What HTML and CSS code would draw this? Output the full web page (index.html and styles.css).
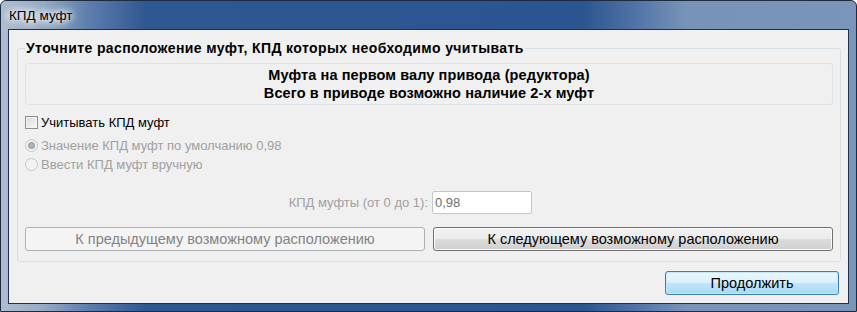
FILE: index.html
```html
<!DOCTYPE html>
<html>
<head>
    <title>КПД муфт</title>
    <link rel="stylesheet" href="styles.css">
</head>
<body>
    <div class="window">
        <div class="titlebar">КПД муфт</div>
        <div class="client">
            <fieldset class="group">
                <legend>Уточните расположение муфт, КПД которых необходимо учитывать</legend>
                <div class="info">
                    <div>Муфта на первом валу привода (редуктора)</div>
                    <div>Всего в приводе возможно наличие 2-х муфт</div>
                </div>
                <label class="row check-row">
                    <span class="checkbox"></span>
                    Учитывать КПД муфт
                </label>
                <div class="row radio-row first disabled">
                    <span class="radio checked"></span>
                    Значение КПД муфт по умолчанию 0,98
                </div>
                <div class="row radio-row disabled">
                    <span class="radio"></span>
                    Ввести КПД муфт вручную
                </div>
                <div class="field-row">
                    <span class="field-label">КПД муфты (от 0 до 1):</span>
                    <span class="field-input">0,98</span>
                </div>
                <div class="nav-buttons">
                    <div class="btn btn-disabled">К предыдущему возможному расположению</div>
                    <div class="btn">К следующему возможному расположению</div>
                </div>
            </fieldset>
            <div class="footer">
                <div class="btn btn-default">Продолжить</div>
            </div>
        </div>
    </div>
</body>
</html>
```

FILE: styles.css
```css
body {
    margin: 0;
    font-family: "Liberation Sans", Arial, sans-serif;
    font-size: 13px;
    color: #000;
    background: #fff;
}
.window {
    width: 857px;
    height: 312px;
    box-sizing: border-box;
    border: 1px solid #1f2b3c;
    border-radius: 6px 6px 0 0;
    background: linear-gradient(90deg, #aebdd1 0%, #97aac6 5%, #5f7fae 10%, #2f5792 17%, #2b5591 68%, #4f72a6 74%, #7893b8 80%, #7a95ba 100%);
    padding: 0 7px 7px 7px;
    display: flex;
    flex-direction: column;
}
.titlebar {
    height: 28px;
    line-height: 30px;
    font-size: 13.5px;
    padding-left: 1px;
    color: #000;
    text-shadow: 0 0 6px #fff, 0 0 8px #fff, 0 0 10px #fff;
}
.client {
    flex: 1;
    background: #f0f0f0;
    border: 1px solid #1f3050;
    display: flex;
    flex-direction: column;
}
.group {
    margin: 10px 8px 0 8px;
    padding: 0 7px 10px 7px;
    border: 1px solid #d5dfe5;
    border-radius: 3px;
}
.group legend {
    font-weight: bold;
    font-size: 14px;
    letter-spacing: 0.4px;
    line-height: 17px;
    padding: 0 1px;
}
.info {
    margin-top: 6px;
    height: 40px;
    border: 1px solid #dce3e9;
    border-radius: 3px;
    display: flex;
    flex-direction: column;
    justify-content: center;
    align-items: center;
    font-weight: bold;
    font-size: 14.5px;
    letter-spacing: 0.1px;
    line-height: 18px;
}
.row {
    display: flex;
    align-items: center;
    gap: 3px;
    height: 19px;
}
.check-row {
    margin-top: 8px;
}
.radio-row.first {
    margin-top: 4px;
}
.disabled {
    color: #a0a0a0;
}
.checkbox {
    width: 11px;
    height: 11px;
    border: 1px solid #8e8f8f;
    background: linear-gradient(135deg, #dcdcdc, #f6f6f6);
    box-shadow: inset 0 0 0 1px #f4f4f4;
}
.radio {
    width: 11px;
    height: 11px;
    border: 1px solid #c6c6c6;
    border-radius: 50%;
    background: #f2f2f2;
    position: relative;
}
.radio.checked::after {
    content: "";
    position: absolute;
    left: 2px;
    top: 2px;
    width: 7px;
    height: 7px;
    border-radius: 50%;
    background: radial-gradient(circle, #b4b4b4 20%, #9c9c9c 80%);
}
.field-row {
    display: flex;
    align-items: center;
    gap: 4px;
    margin-top: 17px;
}
.field-label {
    width: 403px;
    text-align: right;
    color: #a0a0a0;
}
.field-input {
    width: 96px;
    height: 21px;
    line-height: 21px;
    padding-left: 2px;
    border: 1px solid #c5c5c5;
    border-radius: 2px;
    background: #fff;
    color: #6d6d6d;
}
.nav-buttons {
    display: grid;
    grid-template-columns: 400px 400px;
    column-gap: 8px;
    margin-top: 13px;
}
.btn {
    height: 22px;
    line-height: 22px;
    font-size: 14.5px;
    text-align: center;
    border: 1px solid #707070;
    border-radius: 3px;
    background: linear-gradient(#f2f2f2 0%, #ebebeb 50%, #dddddd 51%, #cfcfcf 100%);
    box-shadow: inset 0 0 0 1px #fcfcfc;
}
.btn-disabled {
    border-color: #adb2b5;
    background: #f4f4f4;
    box-shadow: none;
    color: #838383;
}
.footer {
    display: flex;
    justify-content: flex-end;
    padding: 9px 9px 0 0;
}
.btn-default {
    width: 172px;
    border-color: #3c7fb1;
    background: linear-gradient(#eaf6fd 0%, #d9f0fc 50%, #bee6fd 51%, #a7d9f5 100%);
    box-shadow: inset 0 0 0 1px #c6e6f7;
}
```
